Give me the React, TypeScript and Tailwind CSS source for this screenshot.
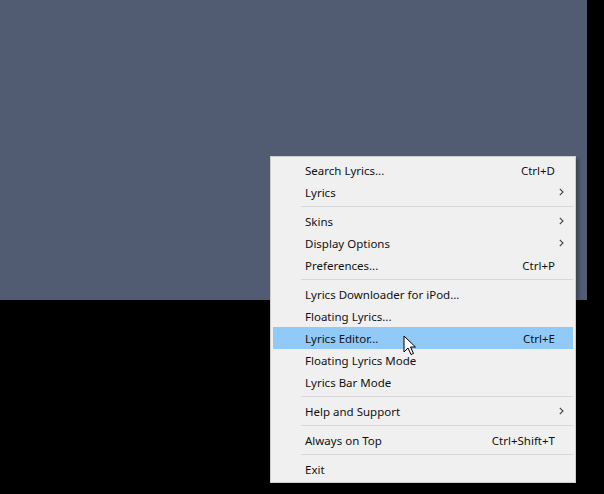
import React from "react";

type Item =
  | { sep: true }
  | { label: string; shortcut?: string; sub?: boolean; active?: boolean };

const items: Item[] = [
  { label: "Search Lyrics...", shortcut: "Ctrl+D" },
  { label: "Lyrics", sub: true },
  { sep: true },
  { label: "Skins", sub: true },
  { label: "Display Options", sub: true },
  { label: "Preferences...", shortcut: "Ctrl+P" },
  { sep: true },
  { label: "Lyrics Downloader for iPod..." },
  { label: "Floating Lyrics..." },
  { label: "Lyrics Editor...", shortcut: "Ctrl+E", active: true },
  { label: "Floating Lyrics Mode" },
  { label: "Lyrics Bar Mode" },
  { sep: true },
  { label: "Help and Support", sub: true },
  { sep: true },
  { label: "Always on Top", shortcut: "Ctrl+Shift+T" },
  { sep: true },
  { label: "Exit" },
];

function Chevron() {
  return (
    <svg width="5" height="8" viewBox="0 0 5 8" className="absolute right-[9px] top-[7px]">
      <path d="M0.8 0.8 L4 4 L0.8 7.2" fill="none" stroke="#404040" strokeWidth="1.1" />
    </svg>
  );
}

function Cursor() {
  return (
    <svg
      width="14"
      height="21"
      viewBox="0 0 14 21"
      className="absolute left-[403px] top-[335px]"
    >
      <path
        d="M1 1 L1 17 L5 13 L8 19.5 L10.5 18.5 L7.5 12 L12.5 12 Z"
        fill="#fff"
        stroke="#000"
        strokeWidth="1"
        strokeLinejoin="round"
      />
    </svg>
  );
}

export default function App() {
  return (
    <div
      className="relative w-[604px] h-[494px] bg-black overflow-hidden"
      style={{ fontFamily: '"Noto Sans", "Open Sans", sans-serif' }}
    >
      <div className="w-[587px] h-[300px] bg-[#515b72]" />

      {/* context menu */}
      <div className="absolute left-[270px] top-[156px] w-[306px] border border-[#cdcdcd] bg-[#f0f0f0] px-[2px] py-[2px] shadow-[3px_3px_3px_rgba(0,0,0,0.25)]">
        {items.map((it, i) =>
          "sep" in it ? (
            <div key={i} className="h-[7px] flex items-center pl-[28px]">
              <div className="h-px w-full bg-[#d7d7d7]" />
            </div>
          ) : (
            <div
              key={i}
              className={
                "relative h-[22px] flex items-center justify-between pt-px pl-[32px] pr-[18px] text-[11.5px] text-[#111] " +
                (it.active ? "bg-[#91c9f7]" : "")
              }
            >
              <span>{it.label}</span>
              {it.shortcut && <span>{it.shortcut}</span>}
              {it.sub && <Chevron />}
            </div>
          )
        )}
      </div>

      <Cursor />
    </div>
  );
}
